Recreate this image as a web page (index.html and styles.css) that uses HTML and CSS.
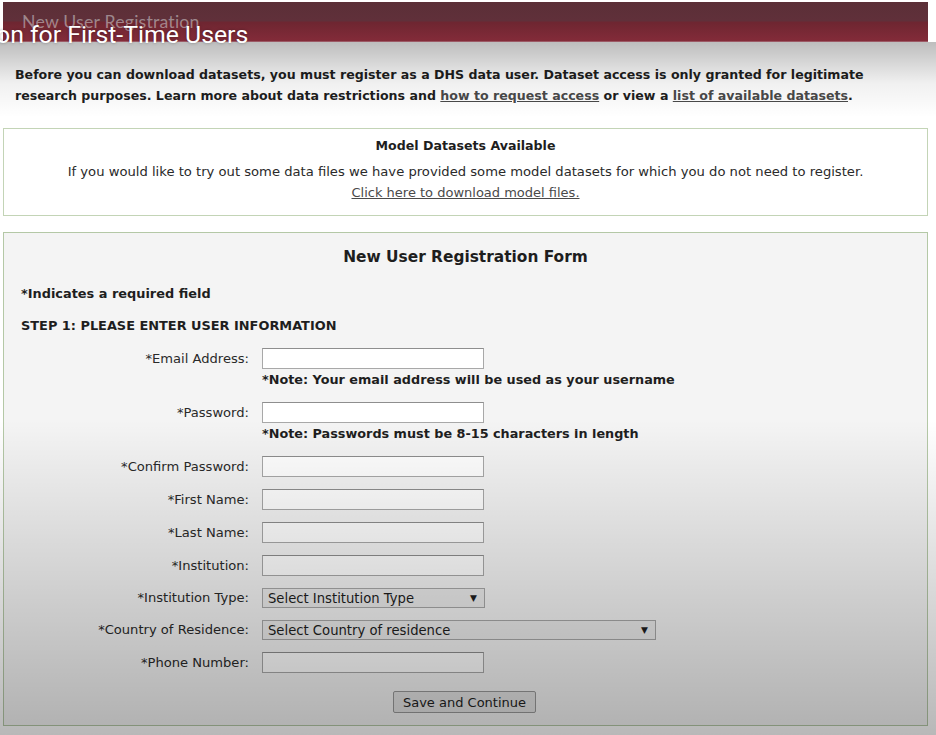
FILE: index.html
```html
<!DOCTYPE html>
<html>
<head>
<meta charset="utf-8">
<link rel="stylesheet" href="styles.css">
</head>
<body>
<div class="page">
  <div class="banner"><span class="banner-title">New User Registration</span></div>

  <p class="intro">Before you can download datasets, you must register as a DHS data user. Dataset access is only granted for legitimate research purposes. Learn more about data restrictions and <a href="#">how to request access</a> or view a <a href="#">list of available datasets</a>.</p>

  <div class="box model">
    <div class="model-title">Model Datasets Available</div>
    <div class="model-text">If you would like to try out some data files we have provided some model datasets for which you do not need to register.</div>
    <div class="model-link"><a href="#">Click here to download model files.</a></div>
  </div>

  <form class="box form">
    <div class="form-title">New User Registration Form</div>
    <div class="required">*Indicates a required field</div>
    <div class="step">STEP 1: PLEASE ENTER USER INFORMATION</div>

    <div class="row">
      <label class="lbl">*Email Address:</label>
      <div class="field">
        <input class="txt" type="text">
        <div class="note">*Note: Your email address will be used as your username</div>
      </div>
    </div>
    <div class="row">
      <label class="lbl">*Password:</label>
      <div class="field">
        <input class="txt" type="password">
        <div class="note">*Note: Passwords must be 8-15 characters in length</div>
      </div>
    </div>
    <div class="row">
      <label class="lbl">*Confirm Password:</label>
      <div class="field"><input class="txt" type="password"></div>
    </div>
    <div class="row">
      <label class="lbl">*First Name:</label>
      <div class="field"><input class="txt" type="text"></div>
    </div>
    <div class="row">
      <label class="lbl">*Last Name:</label>
      <div class="field"><input class="txt" type="text"></div>
    </div>
    <div class="row">
      <label class="lbl">*Institution:</label>
      <div class="field"><input class="txt" type="text"></div>
    </div>
    <div class="row row-sel first-sel">
      <label class="lbl">*Institution Type:</label>
      <div class="field"><div class="sel sel-short"><span>Select Institution Type</span><span class="arrow">▼</span></div></div>
    </div>
    <div class="row row-sel">
      <label class="lbl">*Country of Residence:</label>
      <div class="field"><div class="sel sel-long"><span>Select Country of residence</span><span class="arrow">▼</span></div></div>
    </div>
    <div class="row">
      <label class="lbl">*Phone Number:</label>
      <div class="field"><input class="txt" type="text"></div>
    </div>
    <div class="actions"><button type="button" class="btn">Save and Continue</button></div>
  </form>
</div>

<div class="shade-top"></div>
<div class="shade-bottom"></div>
<div class="video-title">on for First-Time Users</div>
</body>
</html>
```

FILE: styles.css
```css
html, body {
  margin: 0;
  padding: 0;
  background: #ffffff;
  height: 735px;
  overflow: hidden;
}
body {
  font-family: "DejaVu Sans", Verdana, sans-serif;
  color: #1e1e1e;
  position: relative;
}
.page {
  width: 925px;
  margin-left: 3px;
  padding-top: 2px;
}
.banner {
  height: 40px;
  background: linear-gradient(to bottom, #5b2f37 0%, #60303a 48%, #6e2631 52%, #832b39 100%);
  border-bottom: 1px solid #9c5a66;
  box-sizing: border-box;
  position: relative;
}
.banner-title {
  position: absolute;
  left: 19px;
  top: 9px;
  font-family: "Lato", "Open Sans", sans-serif;
  font-size: 17.7px;
  color: rgba(200, 196, 198, 0.6);
  letter-spacing: 0.2px;
}
.intro {
  margin: 22px 0 0 12px;
  font-size: 12.6px;
  font-weight: bold;
  line-height: 21px;
  width: 890px;
}
.intro a {
  color: #4a4a4a;
  font-weight: bold;
}
.box {
  border: 1px solid #c3d4b6;
  box-sizing: border-box;
}
.model {
  margin-top: 22px;
  height: 88px;
  padding-top: 6px;
  text-align: center;
  font-size: 13.15px;
  line-height: 21px;
  background: #fff;
}
.model-title {
  font-weight: bold;
  font-size: 12.6px;
  margin-bottom: 5px;
}
.model-text { color: #2a2a2a; }
.model-link a { color: #4a4a4a; font-size: 13px; }
.form {
  margin-top: 16px;
  height: 494px;
  background: #f4f4f4;
  border-color: #b4c8a6;
  padding: 14px 0 0 0;
  display: block;
}
.form-title {
  text-align: center;
  font-weight: bold;
  font-size: 15.4px;
  line-height: 20px;
}
.required {
  font-weight: bold;
  font-size: 12.9px;
  line-height: 20px;
  margin: 17px 0 0 17px;
}
.step {
  font-weight: bold;
  font-size: 12.9px;
  line-height: 20px;
  margin: 12px 0 12px 17px;
}
.row {
  display: grid;
  grid-template-columns: 245px 1fr;
  column-gap: 13px;
  margin-bottom: 12px;
}
.first-sel { margin-top: 1px; }
.row-sel .lbl { line-height: 20px; }
.lbl {
  text-align: right;
  font-size: 13.1px;
  line-height: 21px;
  color: #2a2a2a;
}
.field { display: flex; flex-direction: column; align-items: flex-start; }
.txt {
  width: 222px;
  height: 21px;
  box-sizing: border-box;
  margin: 0;
  border: 1px solid #a8a8a8;
  border-top-color: #8e8e8e;
  background: #fff;
  padding: 0 3px;
}
.note {
  font-size: 12.8px;
  font-weight: bold;
  line-height: 20px;
  margin-top: 1px;
}
.sel {
  height: 20px;
  box-sizing: border-box;
  border: 1px solid #a8a8a8;
  background: #ececec;
  display: flex;
  align-items: center;
  justify-content: space-between;
  padding: 0 7px 0 5px;
  font-size: 13.2px;
  color: #1e1e1e;
}
.sel-short { width: 223px; }
.sel-long { width: 394px; }
.arrow { font-size: 9px; }
.actions {
  display: flex;
  justify-content: flex-start;
  padding-left: 389px;
  margin-top: 18px;
}
.btn {
  width: 143px;
  height: 22px;
  font-family: "DejaVu Sans", Verdana, sans-serif;
  font-size: 13px;
  color: #222;
  background: #e4e4e4;
  border: 1px solid #999;
  border-radius: 2px;
  padding: 0;
}
.shade-top {
  position: absolute;
  left: 0;
  top: 42px;
  width: 936px;
  height: 75px;
  background: linear-gradient(to bottom, rgba(0,0,0,0.26), rgba(0,0,0,0.06) 55%, rgba(0,0,0,0));
  pointer-events: none;
}
.shade-bottom {
  position: absolute;
  left: 0;
  top: 420px;
  width: 936px;
  height: 315px;
  background: linear-gradient(to bottom, rgba(0,0,0,0), rgba(0,0,0,0.28));
  pointer-events: none;
}
.video-title {
  position: absolute;
  left: -4px;
  top: 19px;
  font-family: Roboto, "Noto Sans", sans-serif;
  font-size: 24.8px;
  line-height: 32px;
  color: #fff;
  text-shadow: 0 0 3px rgba(0,0,0,0.35);
  white-space: nowrap;
}
```
